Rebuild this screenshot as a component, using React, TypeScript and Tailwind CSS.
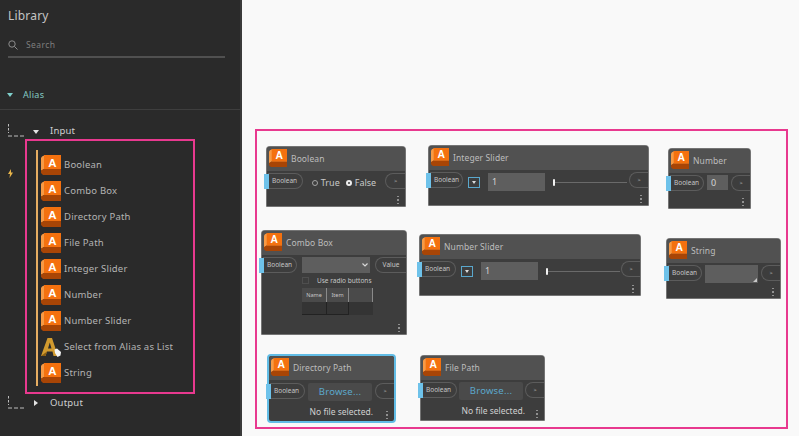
import type { ReactNode } from "react";

const items = ["Boolean", "Combo Box", "Directory Path", "File Path", "Integer Slider", "Number", "Number Slider", "Select from Alias as List", "String"];

function KeyIcon({ size = 20 }: { size?: number }) {
  return (
    <svg width={size} height={size} viewBox="0 0 20 20" className="shrink-0">
      <polygon points="1,1.5 4,0 20,0 20,14 3,14 0,16 0,3" fill="#f79a45" />
      <polygon points="0,15.5 3,14 20,14 20,20 2,20 0,18" fill="#a84506" />
      <rect x="3" y="0" width="17" height="14" fill="#f4710f" />
      <text x="11.5" y="11.5" textAnchor="middle" fontSize="11.5" fontWeight="700" fill="#fff" fontFamily="'Liberation Sans', sans-serif">A</text>
    </svg>
  );
}

function AliasListIcon() {
  return (
    <svg width="20" height="19" viewBox="0 0 20 19" className="shrink-0">
      <path d="M0 18 L6.5 0 L11 0 L17 18 L12.5 18 L11.5 13.5 L6 13.5 L4.5 18 Z M7 10.5 L10.5 10.5 L8.8 4.5 Z" fill="#d19a2e" fillRule="evenodd" />
      <path d="M0 18 L6 13.5 L4.5 18 Z" fill="#8a5d12" />
      <path d="M13.5 11.5 L16 10.5 L20 14 L19.5 17.5 L16.5 19 L14 15 Z" fill="#f4f4f4" />
    </svg>
  );
}

function TreeMark() {
  return (
    <svg width="17" height="13" viewBox="0 0 17 13" fill="none" stroke="#bdbdbd" strokeWidth="1" className="mb-[1px] shrink-0">
      <path d="M0.5 0 V9" strokeDasharray="2.5 1.5" />
      <path d="M0 12 H17" strokeDasharray="4 2" />
    </svg>
  );
}

function Caret({ open, className }: { open: boolean; className: string }) {
  return open ? (
    <svg width="6" height="4" viewBox="0 0 6 4" className={className}>
      <polygon points="0,0 6,0 3,4" fill="currentColor" />
    </svg>
  ) : (
    <svg width="4" height="6" viewBox="0 0 4 6" className={className}>
      <polygon points="0,0 4,3 0,6" fill="currentColor" />
    </svg>
  );
}

function Sidebar() {
  return (
    <aside className="flex h-[436px] w-[242px] shrink-0 flex-col border-r-2 border-[#3b3b3b] bg-[#2a2a2a] text-[#c8c8c8]">
      <div className="pl-2 pt-[7px] text-[12px] leading-[18px] tracking-[0.2px] text-[#c4c4c4]">Library</div>
      <div className="mx-2 mt-[12px] flex h-[21px] w-[217px] items-center gap-2 border-b-2 border-[#505050] pb-[3px]">
        <svg width="10" height="10" viewBox="0 0 10 10" fill="none" stroke="#8c8c8c" strokeWidth="1">
          <circle cx="4" cy="4" r="3.2" />
          <path d="M6.4 6.4 L9.5 9.5" />
        </svg>
        <span className="text-[8.5px] tracking-[0.4px] text-[#7e7e7e]">Search</span>
      </div>
      <div className="flex h-[52px] items-end border-b border-[#3e3e3e] pb-[7px] pl-[7px]">
        <div className="flex items-center gap-[10px] leading-[14px]">
          <Caret open className="text-[#7fd0cb]" />
          <span className="text-[9px] tracking-[0.3px] text-[#84c9c3]">Alias</span>
        </div>
      </div>
      <div className="mt-[14px] flex items-end pl-2">
        <TreeMark />
        <Caret open className="mb-[4px] ml-[8px] text-[#e4e4e4]" />
        <span className="ml-[11px] text-[9.5px] leading-[14px] tracking-[0.2px] text-[#d0d0d0]">Input</span>
      </div>
      <div className="relative ml-[25px] mt-[1px] h-[255px] w-[170px] border-2 border-[#e8398f] pl-[9px] pt-[9px]">
        <div className="flex h-[236px] border-l-2 border-[#e5ad62] pl-[3px]">
          <ul className="mt-[2px] flex flex-col">
            {items.map((name) => (
              <li key={name} className="flex h-[26.3px] items-center gap-[3px]">
                <span className="flex w-[20px] justify-center">
                  {name.startsWith("Select") ? <AliasListIcon /> : <KeyIcon />}
                </span>
                <span className="text-[9.5px] tracking-[0.2px] whitespace-nowrap text-[#b4b4b4]">{name}</span>
              </li>
            ))}
          </ul>
        </div>
        <svg width="5" height="9" viewBox="0 0 5 9" className="absolute top-[28px] left-[-19px]">
          <path d="M3 0 L0 5 L2 5 L1.5 9 L5 3.5 L3 3.5 Z" fill="#e7b44a" />
        </svg>
      </div>
      <div className="mt-[2px] flex items-end pl-2">
        <TreeMark />
        <Caret open={false} className="mb-[4px] ml-[9px] text-[#e4e4e4]" />
        <span className="ml-[12px] text-[9.5px] leading-[14px] tracking-[0.2px] text-[#d0d0d0]">Output</span>
      </div>
    </aside>
  );
}

function Port({ label = "Boolean", w = 35 }: { label?: string; w?: number }) {
  return (
    <div className="relative ml-[1px] flex h-[16px] shrink-0 items-center rounded-r-[8px] border border-l-0 border-[#5c5c5c] pl-[4px] text-[6.5px] text-[#c6c6c6]" style={{ width: w }}>
      <span className="absolute top-[-0.5px] left-[-4px] h-[15px] w-[5px] bg-[#6ec2ea]" />
      {label}
    </div>
  );
}

function OutPort({ label = ">", w = 19 }: { label?: string; w?: number }) {
  return (
    <div className={`flex h-[16px] shrink-0 items-center justify-center rounded-l-[8px] border border-r-0 border-[#5c5c5c] text-[#c6c6c6] ${label === ">" ? "text-[5.5px]" : "text-[6.5px]"}`} style={{ width: w }}>
      {label}
    </div>
  );
}

function Dots() {
  return (
    <div className="absolute right-[6.5px] bottom-[2px] flex flex-col gap-[2px]">
      <span className="h-[1.5px] w-[1.5px] bg-[#909090]" />
      <span className="h-[1.5px] w-[1.5px] bg-[#909090]" />
      <span className="h-[1.5px] w-[1.5px] bg-[#909090]" />
    </div>
  );
}

function GraphNode({ title, className, selected, children }: { title: string; className: string; selected?: boolean; children: ReactNode }) {
  return (
    <div className={`absolute flex flex-col bg-[#3d3d3d] ${selected ? "rounded-[4px] border-2 border-[#62bde6]" : "rounded-t-[4px] rounded-b-[1px] border border-[#9a9a9a]/60"} ${className}`}>
      <div className="flex h-[24px] shrink-0 items-center gap-[4px] rounded-t-[3px] bg-[#515151] pl-[2px]">
        <span className="mt-[-2px]">
          <KeyIcon size={18} />
        </span>
        <span className="text-[8.5px] tracking-[0.1px] whitespace-nowrap text-[#bdbdbd]">{title}</span>
      </div>
      <div className={`flex items-start justify-between ${selected ? "pt-[3px]" : "pt-[2px]"}`}>{children}</div>
      <Dots />
    </div>
  );
}

function Slider({ trackW }: { trackW: number }) {
  return (
    <div className="flex flex-1 items-center gap-[8px] pl-[5px] pt-[1px]">
      <span className="flex h-[11px] w-[12px] shrink-0 items-center justify-center border border-[#5aa7cc]">
        <span className="h-0 w-0 border-x-[2px] border-t-[3px] border-x-transparent border-t-[#dcdcdc]" />
      </span>
      <span className="flex h-[18px] w-[57px] shrink-0 items-center bg-[#5e5e5e] pl-[4px] text-[9px] text-[#d4d4d4]">1</span>
      <span className="flex items-center">
        <span className="h-[7px] w-[2px] rounded-[1px] bg-[#f2f2f2]" />
        <span className="h-[1px] bg-[#6a6a6a]" style={{ width: trackW }} />
      </span>
    </div>
  );
}

function Browse({ w }: { w: number }) {
  return (
    <div className="flex h-[18px] shrink-0 items-center justify-center rounded-[2px] bg-[#4a4a4a] text-[9.5px] tracking-[0.2px] text-[#5ca8cc]" style={{ width: w }}>
      Browse...
    </div>
  );
}

function Canvas() {
  return (
    <main className="relative h-[436px] flex-1 bg-[#f9f9f9]">
      <div className="absolute top-[129px] left-[13px] h-[300px] w-[533px] border-2 border-[#e8398f]" />

      <GraphNode title="Boolean" className="top-[146px] left-[24px] h-[61px] w-[140px]">
        <Port />
        <div className="flex items-center pt-[3px] text-[9px] text-[#c8c8c8]">
          <span className="h-[6px] w-[6px] rounded-full border border-[#a4a4a4]" />
          <span className="ml-[3px]">True</span>
          <span className="ml-[6px] h-[6px] w-[6px] rounded-full border-2 border-[#eeeeee]" />
          <span className="ml-[3px]">False</span>
        </div>
        <OutPort w={20} />
      </GraphNode>

      <GraphNode title="Integer Slider" className="top-[145px] left-[186px] h-[61px] w-[221px]">
        <Port w={33} />
        <Slider trackW={72} />
        <OutPort />
      </GraphNode>

      <GraphNode title="Number" className="top-[148px] left-[426px] h-[61px] w-[83px]">
        <Port w={34} />
        <span className="flex h-[15px] w-[21px] shrink-0 items-center bg-[#5e5e5e] pl-[4px] text-[9px] text-[#d4d4d4]">0</span>
        <OutPort />
      </GraphNode>

      <GraphNode title="Combo Box" className="top-[230px] left-[19px] h-[105px] w-[146px]">
        <Port w={34} />
        <div className="flex w-[68px] shrink-0 flex-col">
          <div className="flex h-[16px] items-center justify-end bg-[#5e5e5e] pr-[2px]">
            <svg width="6" height="4" viewBox="0 0 6 4" fill="none" stroke="#d8d8d8" strokeWidth="1.2">
              <path d="M0.5 0.5 L3 3 L5.5 0.5" />
            </svg>
          </div>
          <div className="mt-[3px] flex items-center gap-[8px] text-[6.5px] text-[#c6c6c6]">
            <span className="h-[7px] w-[7px] shrink-0 border border-[#4e4e4e]" />
            <span className="whitespace-nowrap">Use radio buttons</span>
          </div>
          <div className="mt-[2px] grid w-[71px] grid-cols-[25px_22px_24px] text-[5.5px] text-[#c6c6c6]">
            <span className="flex h-[14px] items-center justify-center border-r border-[#8a8a8a] bg-[#4a4a4a]">Name</span>
            <span className="flex h-[14px] items-center justify-center border-r border-[#8a8a8a] bg-[#4a4a4a]">Item</span>
            <span className="h-[14px] border-r border-[#8a8a8a] bg-[#4a4a4a]" />
            <span className="h-[13px] border-r border-b border-[#222222] bg-[#343434]" />
            <span className="h-[13px] border-r border-b border-[#222222] bg-[#343434]" />
            <span className="h-[13px] bg-[#343434]" />
          </div>
        </div>
        <OutPort label="Value" w={31} />
      </GraphNode>

      <GraphNode title="Number Slider" className="top-[234px] left-[177px] h-[62px] w-[222px]">
        <Port />
        <Slider trackW={72} />
        <OutPort />
      </GraphNode>

      <GraphNode title="String" className="top-[238px] left-[424px] h-[61px] w-[115px]">
        <Port w={34} />
        <div className="relative h-[18px] w-[53px] shrink-0 bg-[#5e5e5e]">
          <span className="absolute right-[1px] bottom-[1px] h-0 w-0 border-b-[4px] border-l-[4px] border-b-[#c8c8c8] border-l-transparent" />
        </div>
        <OutPort />
      </GraphNode>

      <GraphNode title="Directory Path" selected className="top-[354px] left-[25px] h-[69px] w-[129px]">
        <Port />
        <Browse w={64} />
        <OutPort />
        <span className="absolute right-[21px] bottom-[2px] text-[8.5px] whitespace-nowrap text-[#d0d0d0]">No file selected.</span>
      </GraphNode>

      <GraphNode title="File Path" className="top-[355px] left-[178px] h-[66px] w-[125px]">
        <Port />
        <Browse w={64} />
        <OutPort />
        <span className="absolute right-[19px] bottom-[2px] text-[8.5px] whitespace-nowrap text-[#d0d0d0]">No file selected.</span>
      </GraphNode>
    </main>
  );
}

export default function App() {
  return (
    <div className="flex h-[436px] w-[799px] overflow-hidden font-['Noto_Sans',sans-serif]">
      <Sidebar />
      <Canvas />
    </div>
  );
}
